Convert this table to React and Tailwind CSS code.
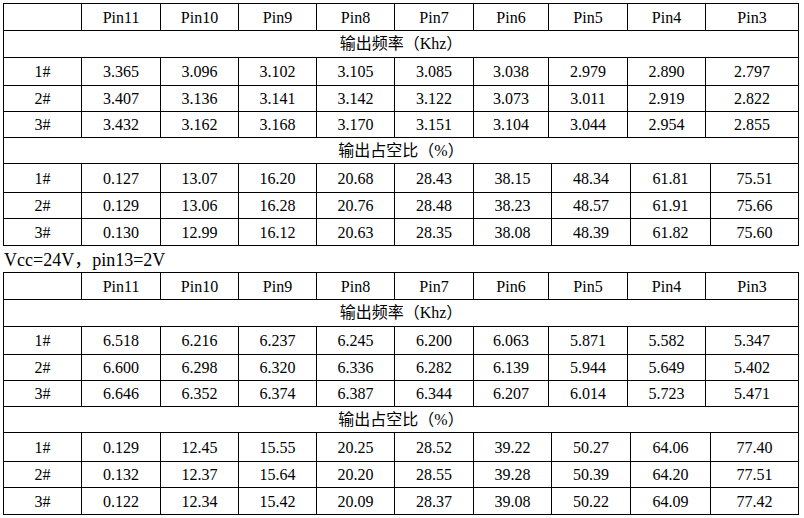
const headers = ["Pin11", "Pin10", "Pin9", "Pin8", "Pin7", "Pin6", "Pin5", "Pin4", "Pin3"];

// column widths: header + frequency rows use one set, duty rows a slightly shifted one
const colsA = "grid-cols-[78px_79px_78px_78px_78px_79px_75px_79px_78px_93px]";
const colsB = "grid-cols-[78px_79px_78px_78px_78px_79px_78px_79px_80px_88px]";

const tables = [
  {
    heights: ["h-[27px]", "h-[27px]", "h-[28px]", "h-[26px]", "h-[26px]", "h-[26px]", "h-[29px]", "h-[26px]", "h-[27px]"],
    freq: [
      ["1#", "3.365", "3.096", "3.102", "3.105", "3.085", "3.038", "2.979", "2.890", "2.797"],
      ["2#", "3.407", "3.136", "3.141", "3.142", "3.122", "3.073", "3.011", "2.919", "2.822"],
      ["3#", "3.432", "3.162", "3.168", "3.170", "3.151", "3.104", "3.044", "2.954", "2.855"],
    ],
    duty: [
      ["1#", "0.127", "13.07", "16.20", "20.68", "28.43", "38.15", "48.34", "61.81", "75.51"],
      ["2#", "0.129", "13.06", "16.28", "20.76", "28.48", "38.23", "48.57", "61.91", "75.66"],
      ["3#", "0.130", "12.99", "16.12", "20.63", "28.35", "38.08", "48.39", "61.82", "75.60"],
    ],
  },
  {
    heights: ["h-[27px]", "h-[27px]", "h-[28px]", "h-[26px]", "h-[26px]", "h-[26px]", "h-[29px]", "h-[26px]", "h-[27px]"],
    freq: [
      ["1#", "6.518", "6.216", "6.237", "6.245", "6.200", "6.063", "5.871", "5.582", "5.347"],
      ["2#", "6.600", "6.298", "6.320", "6.336", "6.282", "6.139", "5.944", "5.649", "5.402"],
      ["3#", "6.646", "6.352", "6.374", "6.387", "6.344", "6.207", "6.014", "5.723", "5.471"],
    ],
    duty: [
      ["1#", "0.129", "12.45", "15.55", "20.25", "28.52", "39.22", "50.27", "64.06", "77.40"],
      ["2#", "0.132", "12.37", "15.64", "20.20", "28.55", "39.28", "50.39", "64.20", "77.51"],
      ["3#", "0.122", "12.34", "15.42", "20.09", "28.37", "39.08", "50.22", "64.09", "77.42"],
    ],
  },
];

function Row({ cells, cols, h }) {
  return (
    <div className={`grid ${cols} ${h}`}>
      {cells.map((c, i) => (
        <div key={i} className="flex items-center justify-center border-r border-b border-black pt-[1px]">
          {c}
        </div>
      ))}
    </div>
  );
}

function Title({ text, h }) {
  return (
    <div className={`flex items-center justify-center border-r border-b border-black ${h}`}>
      {text}
    </div>
  );
}

function DataTable({ data }) {
  const h = data.heights;
  return (
    <div className="w-[796px] border-t border-l border-black">
      <Row cells={["", ...headers]} cols={colsA} h={h[0]} />
      <Title text="输出频率（Khz）" h={h[1]} />
      {data.freq.map((r, i) => (
        <Row key={i} cells={r} cols={colsA} h={h[2 + i]} />
      ))}
      <Title text="输出占空比（%）" h={h[5]} />
      {data.duty.map((r, i) => (
        <Row key={i} cells={r} cols={colsB} h={h[6 + i]} />
      ))}
    </div>
  );
}

export default function App() {
  return (
    <div
      className="w-[804px] h-[518px] bg-white text-black pl-[3px] pt-[3px] text-[16px] leading-none"
      style={{ fontFamily: '"Liberation Serif", "Noto Sans CJK SC", serif' }}
    >
      <DataTable data={tables[0]} />
      <div className="h-[26px] flex items-end pb-[3px] pl-[1px] text-[18px]">Vcc=24V，pin13=2V</div>
      <DataTable data={tables[1]} />
    </div>
  );
}
